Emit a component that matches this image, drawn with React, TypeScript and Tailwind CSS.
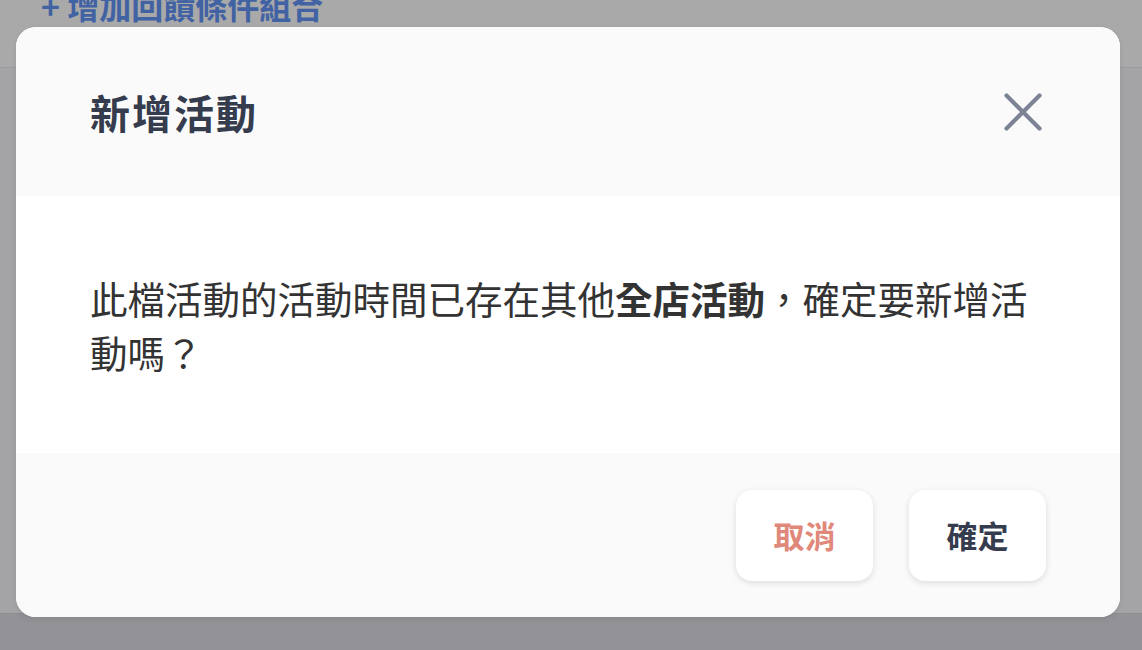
const font = {
  fontFamily: '"Noto Sans CJK TC", "Noto Sans", sans-serif',
};

export default function App() {
  return (
    <div className="relative h-[650px] w-full overflow-hidden" style={font}>
      {/* page behind the backdrop */}
      <div className="flex h-full flex-col">
        <div className="h-[68px] border-b border-[#9a9a9d] bg-[#a9a9a9]">
          <div className="-mt-[17px] pl-[41px] text-[32px] font-bold leading-[44px] text-[#4162a3]">
            + 增加回饋條件組合
          </div>
        </div>
        <div className="flex-1 bg-[#a4a4a6]" />
        <div className="h-[37px] border-t border-[#8e8e92] bg-[#939397]" />
      </div>

      {/* modal */}
      <div className="absolute left-[16px] top-[27px] flex w-[1104px] flex-col overflow-hidden rounded-[20px] bg-white shadow-[0_2px_6px_rgba(0,0,0,0.08)]">
        <div className="flex h-[169px] items-center justify-between bg-[#fafafa] pl-[74px] pr-[76px]">
          <h2 className="text-[40px] font-bold tracking-[2px] text-[#353c4e]">新增活動</h2>
          <button className="text-[#7b8394]">
            <svg width="42" height="42" viewBox="0 0 42 42" fill="none">
              <path
                d="M4.5 4.5L37.5 37.5M37.5 4.5L4.5 37.5"
                stroke="currentColor"
                strokeWidth="4.2"
                strokeLinecap="round"
              />
            </svg>
          </button>
        </div>

        <div className="flex h-[257px] items-center bg-white px-[74px]">
          <p className="w-[950px] text-[37.5px] leading-[54px] text-[#333333]">
            此檔活動的活動時間已存在其他<span className="font-bold">全店活動</span>
            ，確定要新增活動嗎？
          </p>
        </div>

        <div className="flex h-[164px] items-center justify-end gap-[36px] bg-[#fafafa] pr-[74px]">
          <button className="h-[91px] w-[137px] rounded-[16px] bg-white text-[31px] font-bold text-[#e0887a] shadow-[0_2px_6px_rgba(0,0,0,0.12)]">
            取消
          </button>
          <button className="h-[91px] w-[137px] rounded-[16px] bg-white text-[31px] font-bold text-[#353c4e] shadow-[0_2px_6px_rgba(0,0,0,0.12)]">
            確定
          </button>
        </div>
      </div>
    </div>
  );
}
